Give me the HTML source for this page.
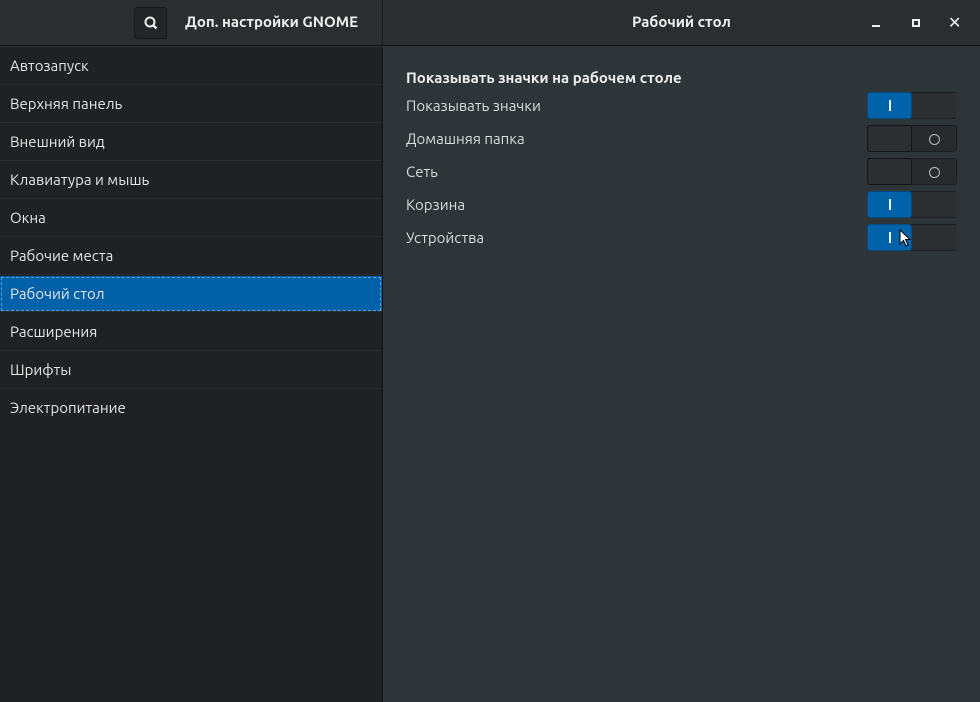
<!DOCTYPE html>
<html><head><meta charset="utf-8"><style>
*{margin:0;padding:0;box-sizing:border-box}
body{width:980px;height:701px;background:#2d3538;font-family:"Ubuntu","Liberation Sans","DejaVu Sans",sans-serif;font-size:15px;color:#dcdcdc;position:relative;overflow:hidden}
.hdr{position:absolute;left:0;top:0;width:980px;height:46px;background:#2b2e31;border-bottom:1px solid #111}
.hl{position:absolute;left:0;top:0;width:383px;height:46px;border-right:1px solid #1a1a1a}
.search{position:absolute;left:134px;top:7px;width:33px;height:32px;background:#232527;border:1px solid #181818;border-radius:3px}
.t{position:absolute;font-weight:bold;color:#eee;top:13px;font-size:15px}
.side{position:absolute;left:0;top:47px;width:383px;height:655px;background:#1f2123;border-right:1px solid #151515}
.row{height:38px;line-height:38px;padding-left:10px;border-bottom:1px solid #2a2c2e;color:#e6e6e6}
.sel{background:#0060a8;outline:1px dashed #5aa0d8;outline-offset:-2px;height:36px;line-height:36px;margin:1px 0}
.lab{position:absolute;left:406px;color:#dcdcdc}
.sw{position:absolute;left:867px;width:90px;height:27px;border-radius:3px;background:#2a2d30;border:1px solid #1c1e20}
.sw .k{position:absolute;top:-1px;width:45px;height:27px;border-radius:3px}
.on .k{left:-1px;background:#0062a9;border:1px solid #004a80}
.on .k::after{content:"";position:absolute;left:21px;top:7px;width:2px;height:11px;background:#e8f2ff}
.off{background:#282b2e}
.off .k{left:-1px;background:#2c2f32;border:1px solid #141516}
.off::after{content:"";position:absolute;left:61px;top:8px;width:9px;height:9px;border:1px solid #bbb;border-radius:50%}
.on::before{content:"";position:absolute;left:44px;top:0;width:45px;height:25px;background:#2c2f32}
</style></head><body>
<div class="hdr">
 <div class="hl"></div>
 <div class="search"><svg width="33" height="32" viewBox="0 0 33 32"><circle cx="15" cy="14" r="4.5" fill="none" stroke="#eee" stroke-width="2"/><line x1="18.3" y1="17.3" x2="21.5" y2="20.5" stroke="#eee" stroke-width="2.4"/></svg></div>
 <div class="t" style="left:185px">Доп. настройки GNOME</div>
 <div class="t" style="left:632px">Рабочий стол</div>
 <div style="position:absolute;left:872px;top:25px;width:8px;height:2px;background:#eee"></div>
 <div style="position:absolute;left:912px;top:19px;width:8px;height:8px;border:2px solid #eee"></div>
 <div style="position:absolute;left:948px;top:13px;color:#eee;font-size:16px;font-weight:bold">✕</div>
</div>
<div class="side">
 <div class="row">Автозапуск</div>
 <div class="row">Верхняя панель</div>
 <div class="row">Внешний вид</div>
 <div class="row">Клавиатура и мышь</div>
 <div class="row">Окна</div>
 <div class="row">Рабочие места</div>
 <div class="row sel">Рабочий стол</div>
 <div class="row">Расширения</div>
 <div class="row">Шрифты</div>
 <div class="row" style="border:none">Электропитание</div>
</div>
<div class="lab" style="top:69px;font-weight:bold;color:#eee">Показывать значки на рабочем столе</div>
<div class="lab" style="top:97px">Показывать значки</div>
<div class="lab" style="top:130px">Домашняя папка</div>
<div class="lab" style="top:163px">Сеть</div>
<div class="lab" style="top:196px">Корзина</div>
<div class="lab" style="top:229px">Устройства</div>
<div class="sw on" style="top:92px"><div class="k"></div></div>
<div class="sw off" style="top:125px"><div class="k"></div></div>
<div class="sw off" style="top:158px"><div class="k"></div></div>
<div class="sw on" style="top:191px"><div class="k"></div></div>
<div class="sw on" style="top:224px"><div class="k"></div></div>
<svg style="position:absolute;left:899px;top:229px" width="14" height="20" viewBox="0 0 14 20"><path d="M1 1 L1 15 L4.5 11.5 L7 17 L9 16 L6.5 10.5 L11 10.5 Z" fill="#fff" stroke="#000" stroke-width="1"/></svg>
</body></html>
